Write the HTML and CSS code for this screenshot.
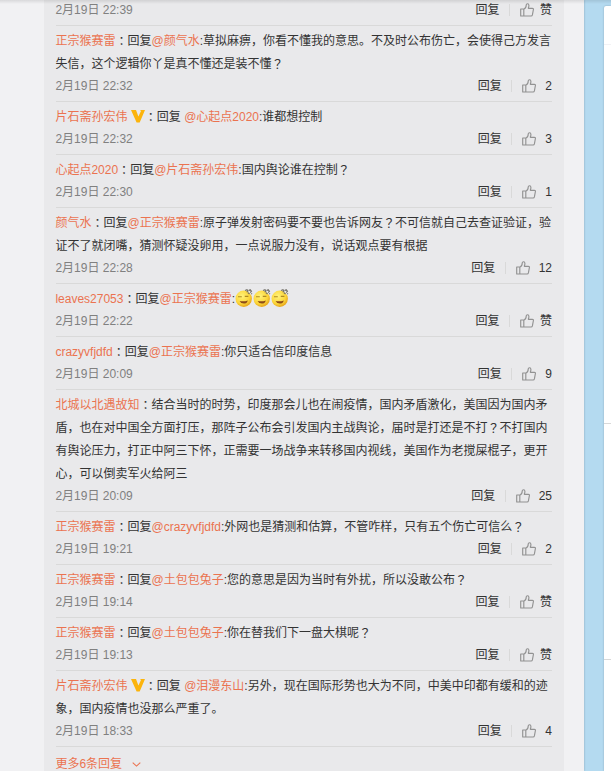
FILE: index.html
```
<!DOCTYPE html>
<html lang="zh-CN">
<head>
    <meta charset="UTF-8">
    <meta name="viewport" content="width=device-width, initial-scale=1.0">
    <title>评论</title>
    <link rel="stylesheet" href="styles.css">
</head>
<body>
    <svg class="symbols" width="0" height="0">
        <symbol id="like" viewBox="0 0 14 14">
            <path d="M.7 6h3.1v7H.7zM3.8 6.2C5.8 5.300 6.200 3.900 6.200 2.200C6.200.3 8.900.2 8.900 2.500C8.900 3.800 8.500 4.600 8.300 5.300h4.100c.8 0 1.100.5 1 1.200l-1 5.400c-.2.8-.6 1.100-1.300 1.100H3.800" fill="none" stroke="#929292" stroke-width="1.150" stroke-linejoin="round"/>
        </symbol>
        <symbol id="vip" viewBox="0 0 14 13">
            <path d="M0 0h5l2.400 6.500L10 1 9 0h5L8.700 12.500H5.600z" fill="#fcb40c"/>
        </symbol>
        <symbol id="face" viewBox="0 0 18 18">
            <radialGradient id="skin" cx=".4" cy=".35" r=".65">
                <stop offset="0" stop-color="#fff27a"/>
                <stop offset=".7" stop-color="#fcd63a"/>
                <stop offset="1" stop-color="#e8a81c"/>
            </radialGradient>
            <circle cx="8.700" cy="9.700" r="8.200" fill="url(#skin)"/>
            <path d="M3 7.800h3.800M9.800 7.400h3.600" fill="none" stroke="#b08a22" stroke-width="1.100"/>
            <path d="M4.600 12q4.500.8 8.200-.6q-1 3.200-4 3.200q-3 0-4.200-2.600z" fill="#8c4a18"/>
            <path d="M10 1.500l2-.8.8 1.500-1.100 1M13.600 1.600l1.600-.8 1.200 1.500-1.200 1.300M13 3.700l1.500 1.300M16.200 4.300l.8.800" fill="none" stroke="#75736b" stroke-width="1.200"/>
        </symbol>
    </svg>
    <div class="page">
        <div class="feed">
            <div class="comments">
                <div class="item first">
                    <div class="meta"><span class="date">2月19日 22:39</span><a class="reply">回复</a><a class="like none"><svg><use href="#like"/></svg>赞</a></div>
                </div>
                <div class="item">
                    <p><a>正宗猴赛雷</a><i lang="ja">：</i>回复<a>@颜气水</a>:草拟麻痹，你看不懂我的意思。不及时公布伤亡，会使得己方发言<br>失信，这个逻辑你丫是真不懂还是装不懂<i lang="ja">？</i></p>
                    <div class="meta"><span class="date">2月19日 22:32</span><a class="reply">回复</a><a class="like"><svg><use href="#like"/></svg>2</a></div>
                </div>
                <div class="item">
                    <p><a>片石斋孙宏伟</a> <svg class="vip"><use href="#vip"/></svg><i lang="ja">：</i>回复 <a>@心起点2020</a>:谁都想控制</p>
                    <div class="meta"><span class="date">2月19日 22:32</span><a class="reply">回复</a><a class="like"><svg><use href="#like"/></svg>3</a></div>
                </div>
                <div class="item">
                    <p><a>心起点2020</a><i lang="ja">：</i>回复<a>@片石斋孙宏伟</a>:国内舆论谁在控制<i lang="ja">？</i></p>
                    <div class="meta"><span class="date">2月19日 22:30</span><a class="reply">回复</a><a class="like"><svg><use href="#like"/></svg>1</a></div>
                </div>
                <div class="item">
                    <p><a>颜气水</a><i lang="ja">：</i>回复<a>@正宗猴赛雷</a>:原子弹发射密码要不要也告诉网友<i lang="ja">？</i>不可信就自己去查证验证，验<br>证不了就闭嘴，猜测怀疑没卵用，一点说服力没有，说话观点要有根据</p>
                    <div class="meta"><span class="date">2月19日 22:28</span><a class="reply">回复</a><a class="like"><svg><use href="#like"/></svg>12</a></div>
                </div>
                <div class="item">
                    <p><a>leaves27053</a><i lang="ja">：</i>回复<a>@正宗猴赛雷</a>:<svg class="face"><use href="#face"/></svg><svg class="face"><use href="#face"/></svg><svg class="face"><use href="#face"/></svg></p>
                    <div class="meta"><span class="date">2月19日 22:22</span><a class="reply">回复</a><a class="like none"><svg><use href="#like"/></svg>赞</a></div>
                </div>
                <div class="item">
                    <p><a>crazyvfjdfd</a><i lang="ja">：</i>回复<a>@正宗猴赛雷</a>:你只适合信印度信息</p>
                    <div class="meta"><span class="date">2月19日 20:09</span><a class="reply">回复</a><a class="like"><svg><use href="#like"/></svg>9</a></div>
                </div>
                <div class="item">
                    <p><a>北城以北遇故知</a><i lang="ja">：</i>结合当时的时势，印度那会儿也在闹疫情，国内矛盾激化，美国因为国内矛<br>盾，也在对中国全方面打压，那阵子公布会引发国内主战舆论，届时是打还是不打<i lang="ja">？</i>不打国内<br>有舆论压力，打正中阿三下怀，正需要一场战争来转移国内视线，美国作为老搅屎棍子，更开<br>心，可以倒卖军火给阿三</p>
                    <div class="meta"><span class="date">2月19日 20:09</span><a class="reply">回复</a><a class="like"><svg><use href="#like"/></svg>25</a></div>
                </div>
                <div class="item">
                    <p><a>正宗猴赛雷</a><i lang="ja">：</i>回复<a>@crazyvfjdfd</a>:外网也是猜测和估算，不管咋样，只有五个伤亡可信么<i lang="ja">？</i></p>
                    <div class="meta"><span class="date">2月19日 19:21</span><a class="reply">回复</a><a class="like"><svg><use href="#like"/></svg>2</a></div>
                </div>
                <div class="item">
                    <p><a>正宗猴赛雷</a><i lang="ja">：</i>回复<a>@土包包兔子</a>:您的意思是因为当时有外扰，所以没敢公布<i lang="ja">？</i></p>
                    <div class="meta"><span class="date">2月19日 19:14</span><a class="reply">回复</a><a class="like none"><svg><use href="#like"/></svg>赞</a></div>
                </div>
                <div class="item">
                    <p><a>正宗猴赛雷</a><i lang="ja">：</i>回复<a>@土包包兔子</a>:你在替我们下一盘大棋呢<i lang="ja">？</i></p>
                    <div class="meta"><span class="date">2月19日 19:13</span><a class="reply">回复</a><a class="like none"><svg><use href="#like"/></svg>赞</a></div>
                </div>
                <div class="item">
                    <p><a>片石斋孙宏伟</a> <svg class="vip"><use href="#vip"/></svg><i lang="ja">：</i>回复 <a>@泪漫东山</a>:另外，现在国际形势也大为不同，中美中印都有缓和的迹<br>象，国内疫情也没那么严重了。</p>
                    <div class="meta"><span class="date">2月19日 18:33</span><a class="reply">回复</a><a class="like"><svg><use href="#like"/></svg>4</a></div>
                </div>
                <div class="more">
                    <a>更多6条回复</a>
                    <svg viewBox="0 0 9 5"><path d="M.7.600l3.800 3.500L8.300.600" fill="none" stroke="#eb7350" stroke-width="1.100"/></svg>
                </div>
            </div>
        </div>
        <div class="side">
            <div class="card head"></div>
            <div class="card mid"></div>
            <div class="card low"></div>
            <div class="card"></div>
        </div>
    </div>
    <div class="topbar"></div>
</body>
</html>
```
FILE: styles.css
```
body {
    margin: 0;
    height: 771px;
    overflow: hidden;
    background-color: #b4daf0;
    font: 12px/23px "Liberation Sans", "Noto Sans CJK SC", sans-serif;
    color: #333;
}
.symbols {
    position: absolute;
}
.page {
    display: flex;
    gap: 20px;
    height: 771px;
}
.feed {
    box-sizing: border-box;
    flex: none;
    width: 584px;
    padding: 0 20px 0 44px;
    background-color: #f1f1f3;
    box-shadow: 0 0 2px rgba(0, 0, 0, 0.25);
}
.comments {
    height: 771px;
    padding: 0 12px;
    background-color: #e9e9eb;
    overflow: hidden;
}
.item {
    padding: 4px 0 5px;
    border-bottom: 1px solid #d9d9d9;
}
.item.first {
    padding-top: 0;
}
.item p {
    margin: 0 0 0 -0.6px;
    white-space: nowrap;
}
a {
    color: #eb7350;
}
i {
    font-family: "Noto Sans CJK JP", sans-serif;
    font-style: normal;
    line-height: 1;
    vertical-align: -1px;
}
.vip {
    width: 14px;
    height: 13px;
    vertical-align: -2px;
}
.face {
    width: 18px;
    height: 18px;
    vertical-align: -4px;
}
.meta {
    display: flex;
    align-items: center;
    height: 20px;
    margin-left: -0.6px;
    line-height: 20px;
}
.date {
    flex: 1;
    color: #808080;
}
.meta a {
    color: #333;
}
.like {
    display: flex;
    align-items: center;
    gap: 9px;
    height: 12px;
    margin-left: 9.5px;
    padding-left: 10px;
    border-left: 1px solid #d9d9d9;
}
.like.none {
    gap: 6px;
}
.like svg {
    width: 14px;
    height: 14px;
}
.more {
    display: flex;
    align-items: center;
    gap: 10px;
    margin-left: -0.6px;
    padding-top: 6px;
}
.more svg {
    width: 9px;
    height: 5px;
}
.side {
    display: flex;
    flex: 1;
    flex-direction: column;
    margin-top: 6px;
    border-radius: 2px 0 0 0;
    background-color: #fff;
    box-shadow: 0 0 2px rgba(0, 0, 0, 0.25);
}
.card {
    border-bottom: 1px solid #d9d9d9;
}
.head {
    height: 38px;
    border-color: #f2f2f5;
}
.mid {
    height: 378px;
}
.low {
    height: 235px;
}
.card:last-child {
    flex: 1;
    border: 0;
}
/* shadow cast by the fixed navigation */
.topbar {
    position: absolute;
    top: 0;
    left: 0;
    width: 100%;
    height: 4px;
    background: linear-gradient(rgba(0, 0, 0, 0.1), rgba(0, 0, 0, 0));
}
```
